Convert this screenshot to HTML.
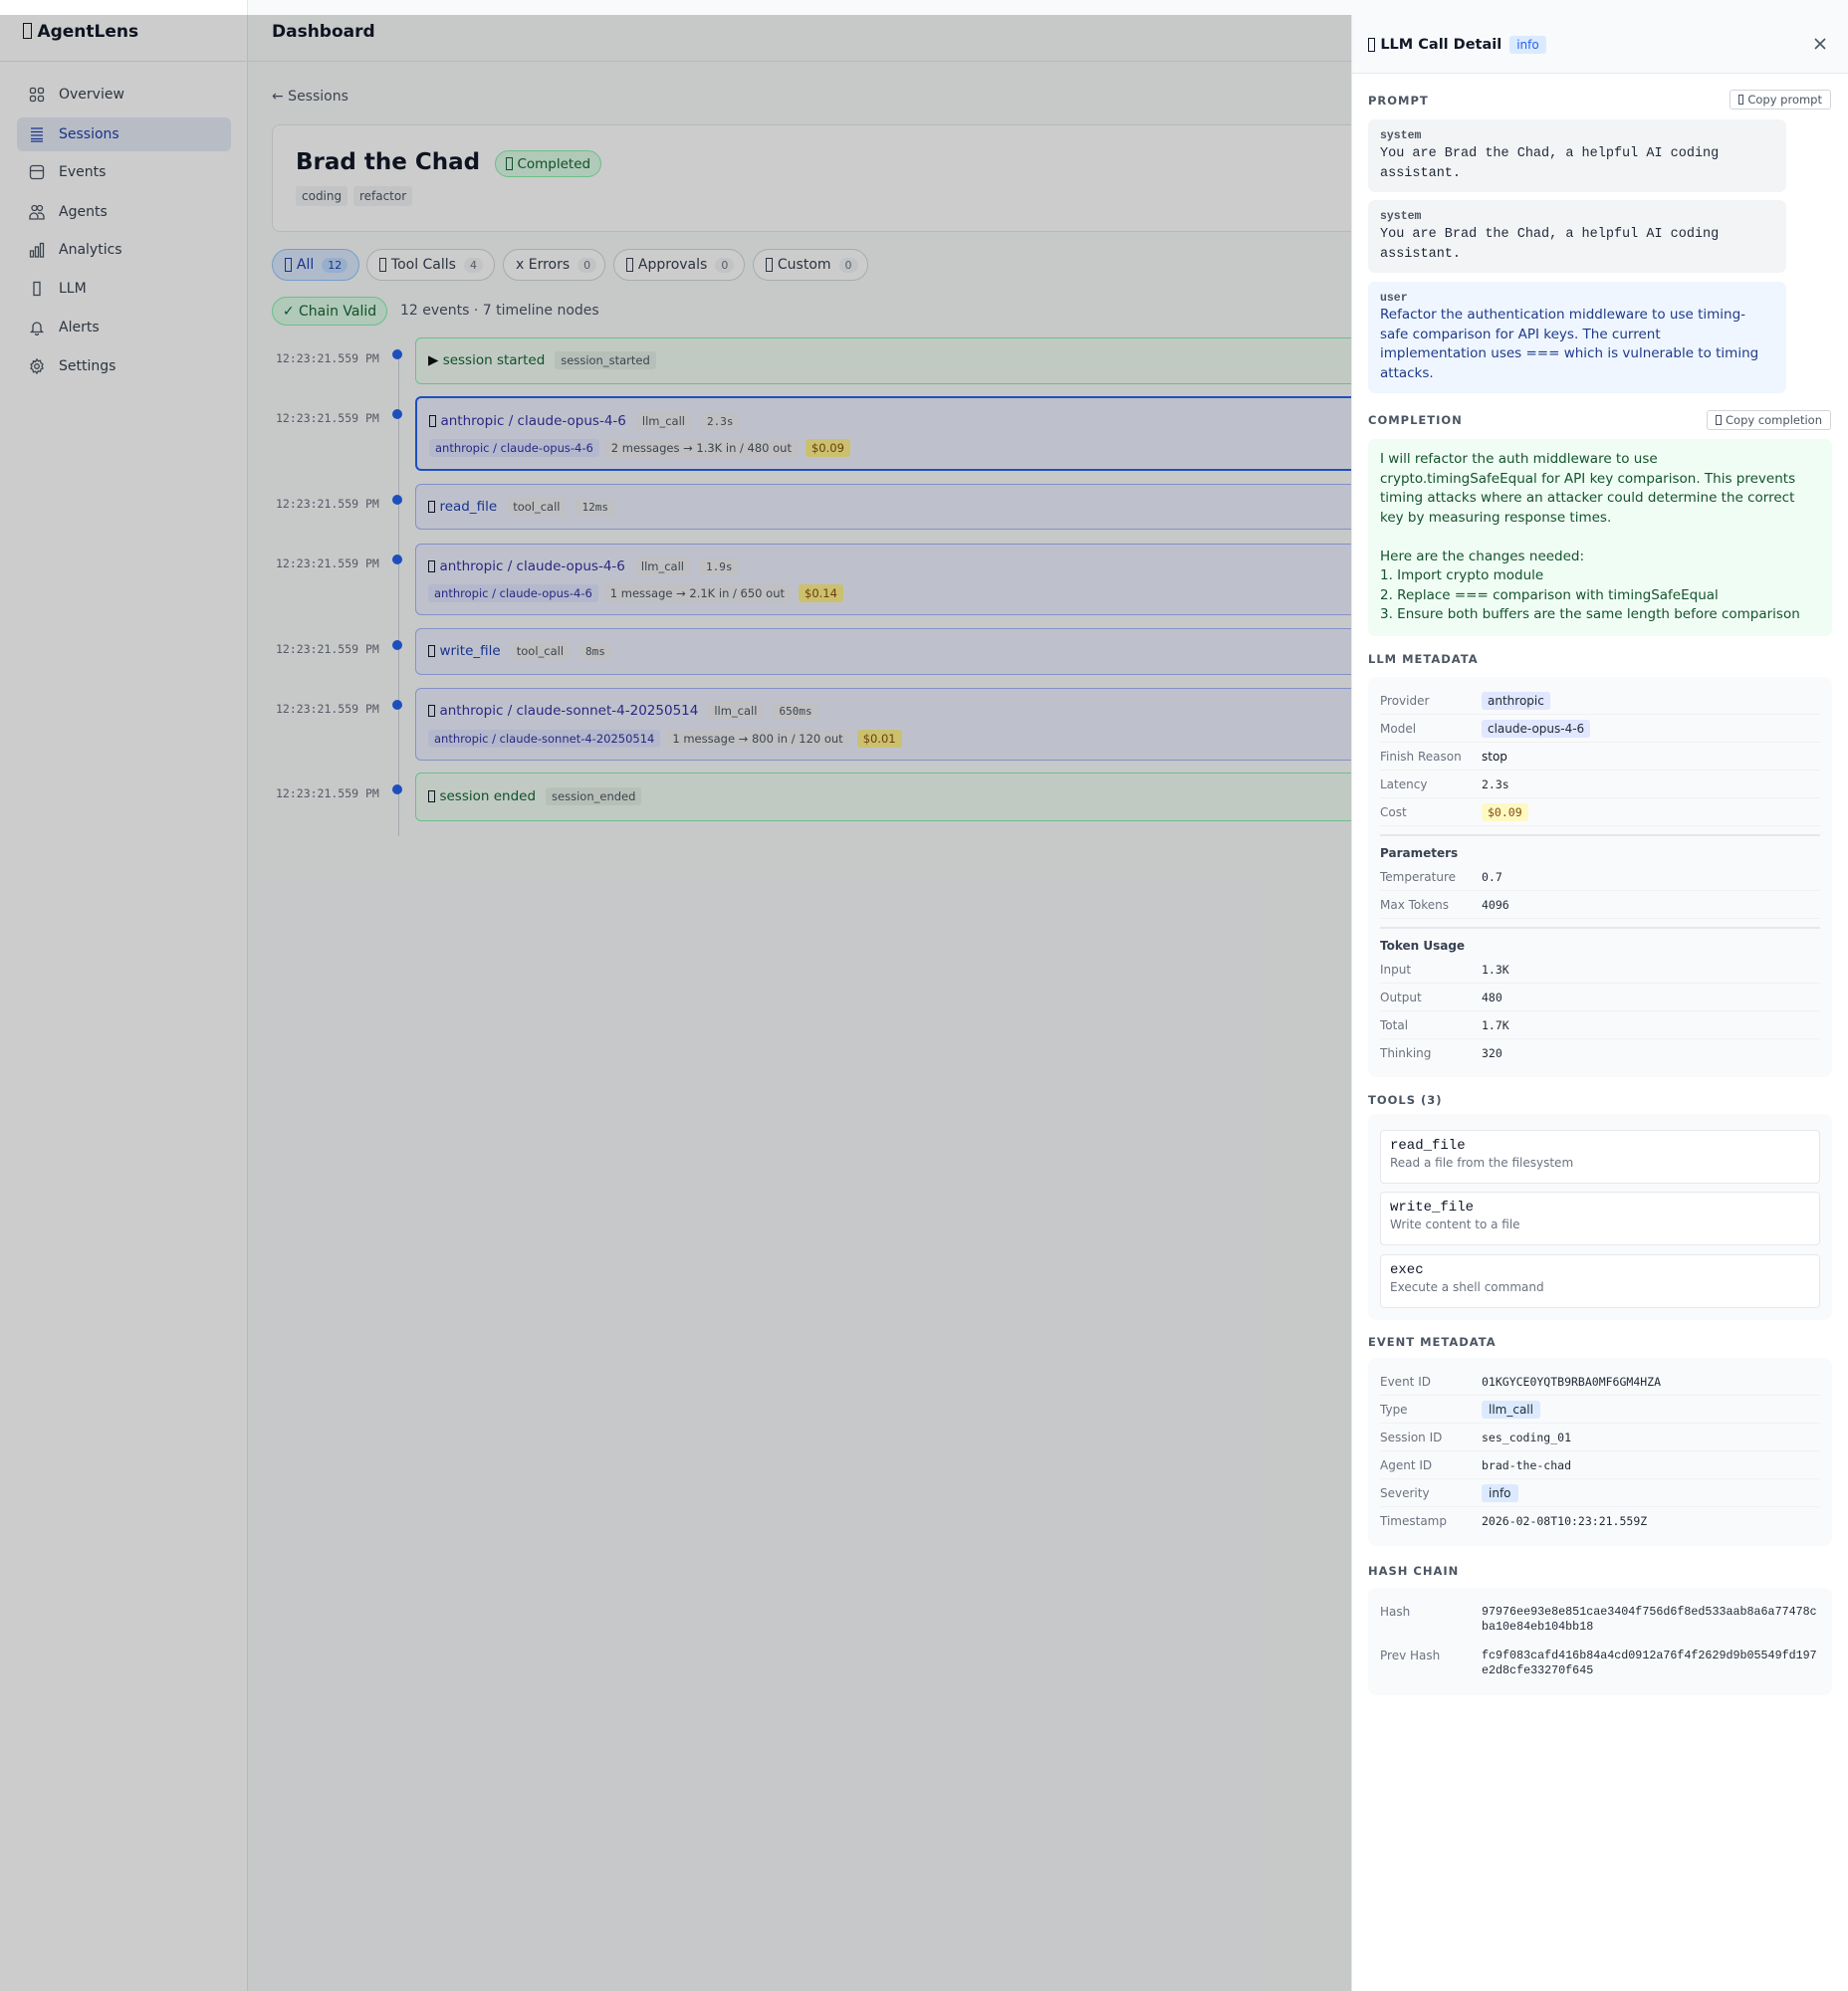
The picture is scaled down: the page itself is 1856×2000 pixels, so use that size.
<!DOCTYPE html>
<html><head><meta charset="utf-8"><style>
*{box-sizing:border-box;margin:0;padding:0}
body{width:1856px;height:2000px;position:relative;overflow:hidden;background:#f9fafb;font-family:"DejaVu Sans","Liberation Sans",sans-serif;color:#111827}
.a{position:absolute}
.tofu{display:inline-block;width:.5em;height:.95em;border:1.3px solid currentColor;vertical-align:-.12em;margin-right:.35em}
.nav{position:absolute;left:17px;width:215px;height:34px;display:flex;align-items:center;padding-left:42px;font-size:14px;color:#374151}
.nav svg{position:absolute;left:12px;top:9px}
.pill{position:absolute;top:249px;height:32px;border:1px solid #d1d5db;border-radius:16px;background:#fff;font-size:14px;color:#374151;display:flex;align-items:center;padding-left:12px}
.pill .n{font-size:11px;background:#f3f4f6;border-radius:9px;padding:1px 6px;margin-left:8px;color:#6b7280}
.ts{position:absolute;left:277px;font-family:"DejaVu Sans Mono",monospace;font-size:11.5px;color:#6b7280}
.dot{position:absolute;left:394px;width:10px;height:10px;border-radius:50%;background:#2563eb}
.card{position:absolute;left:417px;width:980px;border:1px solid #a5b4fc;background:#eef2ff;border-radius:6px;padding-left:12px;font-size:13.5px}
.card.g{border-color:#86efac;background:#f0fdf4}
.r1{position:absolute;left:12px;display:flex;align-items:center;white-space:nowrap}
.b{font-size:11.5px;background:#f0f1f3;color:#4b5563;border-radius:3px;padding:2px 6px;margin-left:10px}
.bm{font-family:"DejaVu Sans Mono",monospace;font-size:11px}
.prov{font-size:11.5px;background:#e0e7ff;color:#3730a3;border-radius:3px;padding:2px 6px}
.cost{font-size:11.5px;background:#fef08a;color:#854d0e;border-radius:3px;padding:2px 6px;margin-left:8px}
.lnk{color:#3730a3}
.panel{position:absolute;left:1357px;top:15px;width:499px;height:1985px;background:#fff;border-left:1px solid #e5e7eb}
.sec{position:absolute;left:16px;font-size:11.5px;font-weight:bold;letter-spacing:1px;color:#4b5563}
.copy{position:absolute;right:17px;height:20px;border:1px solid #d1d5db;border-radius:3px;font-size:11.5px;color:#4b5563;padding:0 8px;display:flex;align-items:center}
.msg{position:absolute;left:16px;width:420px;background:#f3f4f6;border-radius:7px;padding:10px 12px}
.msg .role{font-family:"Liberation Mono",monospace;font-size:11.5px;font-weight:bold;color:#4b5563}
.msg .t{font-family:"Liberation Mono",monospace;font-size:13.5px;line-height:19.5px;color:#1f2937;margin-top:2px}
.box{position:absolute;left:16px;width:466px;background:#f9fafb;border-radius:8px}
.row{position:absolute;left:12px;right:12px;height:28px;border-bottom:1px solid #f0f1f3;font-size:12px;display:flex;align-items:center}
.row .k{width:102px;color:#6b7280}
.row .v{font-family:"DejaVu Sans Mono",monospace;color:#1f2937;font-size:11.5px}
.sub{position:absolute;left:12px;font-size:12px;font-weight:bold;color:#374151}
.tool{position:absolute;left:12px;width:442px;height:54px;background:#fff;border:1px solid #e5e7eb;border-radius:4px;padding:7px 9px}
.tool .n{font-family:"Liberation Mono",monospace;font-size:14px;color:#111827}
.tool .d{font-size:12px;color:#6b7280;margin-top:2px}
.tag{background:#e0e7ff;color:#3730a3;border-radius:3px;padding:2px 6px;font-family:"DejaVu Sans",sans-serif!important}
.tagb{background:#dbeafe;color:#1d4ed8;border-radius:3px;padding:2px 7px;font-family:"DejaVu Sans",sans-serif!important}
.hash{font-family:"Liberation Mono",monospace;font-size:11.7px;line-height:15px;color:#1f2937;white-space:nowrap}
</style></head><body>
<div class="a" style="left:0;top:0;width:249px;height:2000px;background:#fff;border-right:1px solid #e5e7eb"></div>
<div class="a" style="left:0;top:61px;width:1856px;height:1px;background:#e5e7eb"></div>
<div class="a" style="left:23px;top:22px;font-size:17px;font-weight:bold"><span class="tofu"></span>AgentLens</div>
<div class="a" style="left:273px;top:22px;font-size:17px;font-weight:bold">Dashboard</div>
<div class="nav" style="top:78px"><svg width="16" height="16" viewBox="0 0 16 16" fill="none" stroke="#4b5563" stroke-width="1.3"><rect x="1.5" y="1.5" width="5" height="5" rx="1.5"/><rect x="9.5" y="1.5" width="5" height="5" rx="1.5"/><rect x="1.5" y="9.5" width="5" height="5" rx="1.5"/><rect x="9.5" y="9.5" width="5" height="5" rx="1.5"/></svg>Overview</div>
<div class="nav" style="top:118px;background:#e6ecf5;border-radius:6px;color:#1e40af"><svg width="16" height="16" viewBox="0 0 16 16" fill="none" stroke="#1e40af" stroke-width="1.3"><path d="M2 2h12M2 5.5h12M2 9h12M2 12.5h12M2 15h12"/></svg>Sessions</div>
<div class="nav" style="top:156px"><svg width="16" height="16" viewBox="0 0 16 16" fill="none" stroke="#4b5563" stroke-width="1.3"><rect x="1.5" y="1.5" width="13" height="13" rx="2.5"/><path d="M1.5 6.5h13"/></svg>Events</div>
<div class="nav" style="top:196px"><svg width="16" height="16" viewBox="0 0 16 16" fill="none" stroke="#4b5563" stroke-width="1.3"><circle cx="5.5" cy="4" r="2.5"/><circle cx="11" cy="4" r="2.5"/><path d="M1 15v-2a4 4 0 0 1 8 0v2zM9 9.5a4 4 0 0 1 6 3.5v2h-5"/></svg>Agents</div>
<div class="nav" style="top:234px"><svg width="16" height="16" viewBox="0 0 16 16" fill="none" stroke="#4b5563" stroke-width="1.3"><rect x="1.5" y="9" width="3" height="6"/><rect x="6.5" y="5" width="3" height="10"/><rect x="11.5" y="1.5" width="3" height="13.5"/></svg>Analytics</div>
<div class="nav" style="top:273px"><svg width="16" height="16" viewBox="0 0 16 16" fill="none" stroke="#4b5563" stroke-width="1.3"><rect x="5" y="1.5" width="6" height="13"/></svg>LLM</div>
<div class="nav" style="top:312px"><svg width="16" height="16" viewBox="0 0 16 16" fill="none" stroke="#4b5563" stroke-width="1.3"><path d="M4 11V7a4 4 0 0 1 8 0v4l1.5 1.5h-11zM6.5 14a1.5 1.5 0 0 0 3 0"/></svg>Alerts</div>
<div class="nav" style="top:351px"><svg width="16" height="16" viewBox="0 0 16 16" fill="none" stroke="#4b5563" stroke-width="1.3"><circle cx="8" cy="8" r="2.3"/><path d="M8 1l1.3 1.8 2.2-.5.5 2.2L14 6l-1 2 1 2-2 1-.5 2.2-2.2-.5L8 15l-1.3-1.8-2.2.5-.5-2.2L2 10l1-2-1-2 2-1 .5-2.2 2.2.5z"/></svg>Settings</div>

<div class="a" style="left:273px;top:89px;font-size:14px;color:#4b5563">← Sessions</div>
<div class="a" style="left:273px;top:125px;width:1200px;height:108px;background:#fff;border:1px solid #e5e7eb;border-radius:8px"></div>
<div class="a" style="left:297px;top:150px;font-size:23px;font-weight:bold">Brad the Chad</div>
<div class="a" style="left:497px;top:151px;height:27px;padding:0 10px;border:1px solid #86efac;background:#dcfce7;color:#166534;border-radius:14px;font-size:13.5px;display:flex;align-items:center"><span class="tofu"></span>Completed</div>
<div class="a" style="left:297px;top:190px;font-size:12px;color:#4b5563"><span style="background:#f3f4f6;padding:3px 6px;border-radius:3px">coding</span> <span style="background:#f3f4f6;padding:3px 6px;border-radius:3px;margin-left:2px">refactor</span></div>

<div class="pill" style="left:273px;width:88px;background:#dbeafe;border-color:#93c5fd;color:#1e40af;top:250px"><span class="tofu"></span>All<span class="n" style="background:#bfdbfe;color:#1e40af">12</span></div>
<div class="pill" style="left:368px;width:129px;top:250px"><span class="tofu"></span>Tool Calls<span class="n">4</span></div>
<div class="pill" style="left:505px;width:103px;top:250px">x Errors<span class="n">0</span></div>
<div class="pill" style="left:616px;width:132px;top:250px"><span class="tofu"></span>Approvals<span class="n">0</span></div>
<div class="pill" style="left:756px;width:116px;top:250px"><span class="tofu"></span>Custom<span class="n">0</span></div>

<div class="a" style="left:273px;top:298px;width:116px;height:29px;border:1px solid #86efac;background:#dcfce7;color:#166534;border-radius:15px;font-size:14px;display:flex;align-items:center;justify-content:center">✓ Chain Valid</div>
<div class="a" style="left:402px;top:304px;font-size:14px;color:#4b5563">12 events · 7 timeline nodes</div>

<div class="a" style="left:400px;top:350px;width:1px;height:490px;background:#d1d5db"></div>
<div class="ts" style="top:353px">12:23:21.559 PM</div><div class="dot" style="top:351px"></div>
<div class="card g" style="top:339px;height:47px"><div class="r1" style="top:13px"><span style="color:#111">▶</span>&nbsp;<span style="color:#166534">session started</span><span class="b" style="background:#e5f0e7">session_started</span></div></div>
<div class="ts" style="top:413px">12:23:21.559 PM</div><div class="dot" style="top:411px"></div>
<div class="card" style="top:398px;height:75px;border:2px solid #2563eb"><div class="r1" style="top:14px"><span class="tofu"></span><span class="lnk">anthropic / claude-opus-4-6</span><span class="b">llm_call</span><span class="b bm">2.3s</span></div><div class="r1" style="top:41px"><span class="prov">anthropic / claude-opus-4-6</span><span class="b" style="margin-left:6px">2 messages → 1.3K in / 480 out</span><span class="cost">$0.09</span></div></div>
<div class="ts" style="top:499px">12:23:21.559 PM</div><div class="dot" style="top:497px"></div>
<div class="card" style="top:486px;height:46px"><div class="r1" style="top:13px"><span class="tofu"></span><span class="lnk" style="color:#1e40af">read_file</span><span class="b">tool_call</span><span class="b bm">12ms</span></div></div>
<div class="ts" style="top:559px">12:23:21.559 PM</div><div class="dot" style="top:557px"></div>
<div class="card" style="top:546px;height:72px"><div class="r1" style="top:13px"><span class="tofu"></span><span class="lnk">anthropic / claude-opus-4-6</span><span class="b">llm_call</span><span class="b bm">1.9s</span></div><div class="r1" style="top:40px"><span class="prov">anthropic / claude-opus-4-6</span><span class="b" style="margin-left:6px">1 message → 2.1K in / 650 out</span><span class="cost">$0.14</span></div></div>
<div class="ts" style="top:645px">12:23:21.559 PM</div><div class="dot" style="top:643px"></div>
<div class="card" style="top:631px;height:47px"><div class="r1" style="top:13px"><span class="tofu"></span><span class="lnk" style="color:#1e40af">write_file</span><span class="b">tool_call</span><span class="b bm">8ms</span></div></div>
<div class="ts" style="top:705px">12:23:21.559 PM</div><div class="dot" style="top:703px"></div>
<div class="card" style="top:691px;height:73px"><div class="r1" style="top:13px"><span class="tofu"></span><span class="lnk">anthropic / claude-sonnet-4-20250514</span><span class="b">llm_call</span><span class="b bm">650ms</span></div><div class="r1" style="top:41px"><span class="prov">anthropic / claude-sonnet-4-20250514</span><span class="b" style="margin-left:6px">1 message → 800 in / 120 out</span><span class="cost">$0.01</span></div></div>
<div class="ts" style="top:790px">12:23:21.559 PM</div><div class="dot" style="top:788px"></div>
<div class="card g" style="top:776px;height:49px"><div class="r1" style="top:14px"><span class="tofu"></span><span style="color:#166534">session ended</span><span class="b" style="background:#e5f0e7">session_ended</span></div></div>

<div class="a" style="left:0;top:15px;width:1357px;height:1985px;background:rgba(0,0,0,0.2)"></div>

<div class="panel">
<div class="a" style="left:0;top:0;width:498px;height:59px;background:#f9fafb;border-bottom:1px solid #e5e7eb"></div>
<div class="a" style="left:16px;top:21px;font-size:14.5px;font-weight:bold;display:flex;align-items:center"><span class="tofu"></span>LLM Call Detail<span style="font-weight:normal;font-size:12px;color:#2563eb;background:#dbeafe;border-radius:3px;padding:2px 7px;margin-left:8px">info</span></div>
<svg class="a" style="left:462px;top:21px" width="16" height="16" viewBox="0 0 16 16" stroke="#4b5563" stroke-width="1.6"><path d="M3 3l10 10M13 3L3 13"/></svg>

<div class="sec" style="top:79px">PROMPT</div>
<div class="copy" style="top:75px"><span class="tofu"></span>Copy prompt</div>
<div class="msg" style="top:105px;height:73px"><div class="role">system</div><div class="t">You are Brad the Chad, a helpful AI coding assistant.</div></div>
<div class="msg" style="top:186px;height:73px"><div class="role">system</div><div class="t">You are Brad the Chad, a helpful AI coding assistant.</div></div>
<div class="msg" style="top:268px;height:112px;background:#eff6ff;padding-right:24px"><div class="role">user</div><div style="font-size:13.5px;line-height:19.5px;color:#1e3a8a;margin-top:1px">Refactor the authentication middleware to use timing-safe comparison for API keys. The current implementation uses === which is vulnerable to timing attacks.</div></div>

<div class="sec" style="top:400px">COMPLETION</div>
<div class="copy" style="top:397px"><span class="tofu"></span>Copy completion</div>
<div class="a" style="left:16px;top:426px;width:466px;height:198px;background:#f0fdf4;border-radius:7px;padding:11px 14px 11px 12px;font-size:13.5px;line-height:19.5px;color:#14532d;white-space:pre-line">I will refactor the auth middleware to use crypto.timingSafeEqual for API key comparison. This prevents timing attacks where an attacker could determine the correct key by measuring response times.

Here are the changes needed:
1. Import crypto module
2. Replace === comparison with timingSafeEqual
3. Ensure both buffers are the same length before comparison</div>

<div class="sec" style="top:640px">LLM METADATA</div>
<div class="box" style="top:665px;height:402px">
<div class="row" style="top:10px"><span class="k">Provider</span><span class="v tag" style="font-size:12px">anthropic</span></div>
<div class="row" style="top:38px"><span class="k">Model</span><span class="v tag" style="font-size:12px">claude-opus-4-6</span></div>
<div class="row" style="top:66px"><span class="k">Finish Reason</span><span style="font-size:12px">stop</span></div>
<div class="row" style="top:94px"><span class="k">Latency</span><span class="v">2.3s</span></div>
<div class="row" style="top:122px"><span class="k">Cost</span><span class="v" style="background:#fef9c3;color:#854d0e;padding:2px 6px;border-radius:3px">$0.09</span></div>
<div class="a" style="left:12px;right:12px;top:158px;height:2px;background:#e5e7eb"></div>
<div class="sub" style="top:170px">Parameters</div>
<div class="row" style="top:187px"><span class="k">Temperature</span><span class="v">0.7</span></div>
<div class="row" style="top:215px"><span class="k">Max Tokens</span><span class="v">4096</span></div>
<div class="a" style="left:12px;right:12px;top:251px;height:2px;background:#e5e7eb"></div>
<div class="sub" style="top:263px">Token Usage</div>
<div class="row" style="top:280px"><span class="k">Input</span><span class="v">1.3K</span></div>
<div class="row" style="top:308px"><span class="k">Output</span><span class="v">480</span></div>
<div class="row" style="top:336px"><span class="k">Total</span><span class="v">1.7K</span></div>
<div class="row" style="top:364px;border:0"><span class="k">Thinking</span><span class="v">320</span></div>
</div>

<div class="sec" style="top:1083px">TOOLS (3)</div>
<div class="box" style="top:1104px;height:207px">
<div class="tool" style="top:16px"><div class="n">read_file</div><div class="d">Read a file from the filesystem</div></div>
<div class="tool" style="top:78px"><div class="n">write_file</div><div class="d">Write content to a file</div></div>
<div class="tool" style="top:141px"><div class="n">exec</div><div class="d">Execute a shell command</div></div>
</div>

<div class="sec" style="top:1326px">EVENT METADATA</div>
<div class="box" style="top:1349px;height:189px">
<div class="row" style="top:10px"><span class="k">Event ID</span><span class="v">01KGYCE0YQTB9RBA0MF6GM4HZA</span></div>
<div class="row" style="top:38px"><span class="k">Type</span><span class="v tagb" style="font-size:12px">llm_call</span></div>
<div class="row" style="top:66px"><span class="k">Session ID</span><span class="v">ses_coding_01</span></div>
<div class="row" style="top:94px"><span class="k">Agent ID</span><span class="v">brad-the-chad</span></div>
<div class="row" style="top:122px"><span class="k">Severity</span><span class="v tagb" style="font-size:12px">info</span></div>
<div class="row" style="top:150px;border:0"><span class="k">Timestamp</span><span class="v">2026-02-08T10:23:21.559Z</span></div>
</div>

<div class="sec" style="top:1556px">HASH CHAIN</div>
<div class="box" style="top:1580px;height:108px">
<div class="a" style="left:12px;top:17px;font-size:12px;color:#6b7280">Hash</div>
<div class="a hash" style="left:114px;top:17px">97976ee93e8e851cae3404f756d6f8ed533aab8a6a77478c<br>ba10e84eb104bb18</div>
<div class="a" style="left:12px;top:61px;font-size:12px;color:#6b7280">Prev Hash</div>
<div class="a hash" style="left:114px;top:61px">fc9f083cafd416b84a4cd0912a76f4f2629d9b05549fd197<br>e2d8cfe33270f645</div>
</div>
</div>
</body></html>
